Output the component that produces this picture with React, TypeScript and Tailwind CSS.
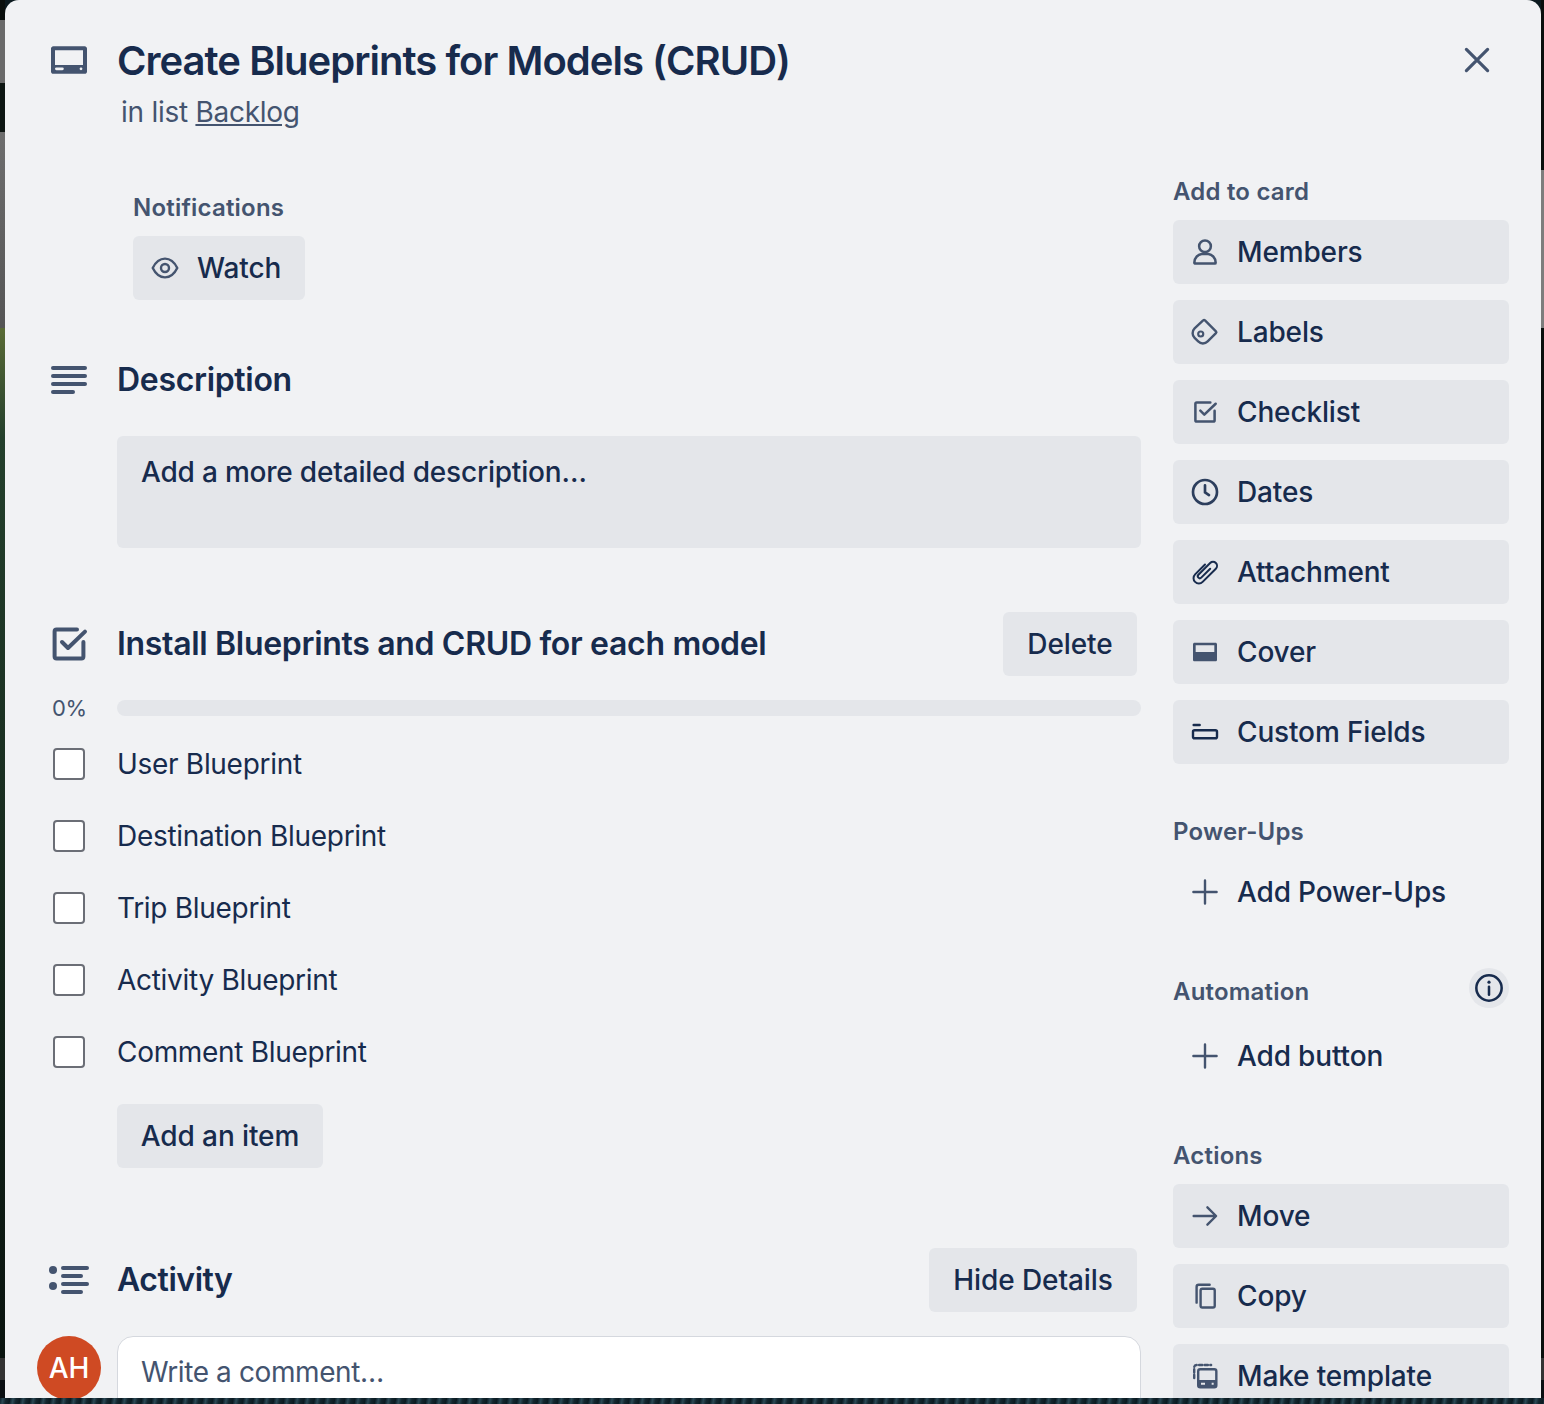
import type { ReactNode } from 'react';

const fontStack = { fontFamily: 'Inter, "Noto Sans", sans-serif' };

function Icon({ size = 32, children, className = 'text-[#44546f]' }: { size?: number; children: ReactNode; className?: string }) {
  return (
    <svg width={size} height={size} viewBox="0 0 24 24" fill="none" className={`shrink-0 ${className}`}>
      {children}
    </svg>
  );
}

const CardIcon = () => (
  <Icon size={48}>
    <path
      fillRule="evenodd"
      fill="currentColor"
      d="M4.200 4.600h15.600c.7 0 1.200.5 1.200 1.200v11.400c0 .7-.5 1.200-1.200 1.200H4.200c-.7 0-1.200-.5-1.200-1.200V5.800c0-.7.5-1.200 1.200-1.200zM5 6.600V14h14V6.600H5zm.7 8.600a.7.7 0 0 0 0 1.400h3a.7.7 0 0 0 0-1.400h-3zm12.300 0a.7.7 0 1 0 0 1.400.7.7 0 0 0 0-1.400z"
    />
  </Icon>
);

const CheckSquare = ({ size = 32, width = 1.9 }: { size?: number; width?: number }) => (
  <Icon size={size}>
    <path
      d="M16 4.800H5.800a1 1 0 0 0-1 1v12.400a1 1 0 0 0 1 1h12.400a1 1 0 0 0 1-1V11"
      stroke="currentColor"
      strokeWidth={width}
      strokeLinecap="round"
    />
    <path d="M8.500 11l3 3L20 5.800" stroke="currentColor" strokeWidth={width} strokeLinecap="round" strokeLinejoin="round" />
  </Icon>
);

const sidebarIcons: Record<string, ReactNode> = {
  Members: (
    <Icon>
      <circle cx="12" cy="7.700" r="4.400" stroke="currentColor" strokeWidth="1.900" />
      <path d="M4 20c0-3.800 2.800-6.100 5.500-6.500h5c2.700.4 5.500 2.700 5.500 6.500 0 .4-.3.7-.7.7H4.700c-.4 0-.7-.3-.7-.7z" stroke="currentColor" strokeWidth="1.900" strokeLinejoin="round" />
    </Icon>
  ),
  Labels: (
    <Icon>
      <path d="M12 3.300l8.200 8.200a1 1 0 0 1 0 1.400L14 19.100a5 5 0 0 1-7.100 0l-2.700-2.700a5 5 0 0 1 0-7.100l6.400-6a1 1 0 0 1 1.400 0z" stroke="currentColor" strokeWidth="1.800" strokeLinejoin="round" />
      <circle cx="8.800" cy="13.500" r="1.900" stroke="currentColor" strokeWidth="1.600" />
    </Icon>
  ),
  Checklist: <CheckSquare />,
  Dates: (
    <Icon className="text-[#2c3e5d]">
      <circle cx="12" cy="12" r="9" stroke="currentColor" strokeWidth="2" />
      <path d="M12 7v5.300l3 2" stroke="currentColor" strokeWidth="2" strokeLinecap="round" strokeLinejoin="round" />
    </Icon>
  ),
  Attachment: (
    <Icon className="text-[#172b4d]">
      <g transform="rotate(45 12 12)">
        <path d="M13 7.500v9.500a1.500 1.500 0 0 1-3 0V4.500a3 3 0 0 1 6 0v14a4 4 0 0 1-8 0V8" stroke="currentColor" strokeWidth="1.500" strokeLinecap="round" />
      </g>
    </Icon>
  ),
  Cover: (
    <Icon>
      <path fillRule="evenodd" fill="currentColor" d="M4.200 5h15.600c.7 0 1.200.5 1.200 1.200v11.600c0 .7-.5 1.200-1.200 1.200H4.200C3.500 19 3 18.500 3 17.800V6.200C3 5.500 3.500 5 4.200 5zM5 7v5h14V7H5z" />
    </Icon>
  ),
  'Custom Fields': (
    <Icon className="text-[#172b4d]">
      <path d="M3.500 6.800h4.500" stroke="currentColor" strokeWidth="1.800" strokeLinecap="round" />
      <rect x="3" y="10.700" width="18" height="6" rx="1.200" stroke="currentColor" strokeWidth="1.800" />
    </Icon>
  ),
  Plus: (
    <Icon>
      <path d="M12 3.300v17.400M3.300 12h17.400" stroke="currentColor" strokeWidth="1.800" strokeLinecap="round" />
    </Icon>
  ),
  Move: (
    <Icon>
      <path d="M3.500 12h16.500M13.800 5.500l6.500 6.500-6.500 6.500" stroke="currentColor" strokeWidth="1.800" strokeLinecap="round" strokeLinejoin="round" />
    </Icon>
  ),
  Copy: (
    <Icon>
      <path d="M5.700 17V5.200c0-1 .8-1.600 1.600-1.600h8.200" stroke="currentColor" strokeWidth="1.800" strokeLinecap="round" />
      <rect x="8.700" y="6.600" width="10.600" height="14" rx="1.300" stroke="currentColor" strokeWidth="1.800" />
    </Icon>
  ),
  'Make template': (
    <Icon>
      <path d="M3.900 13.500V5.500c0-1 .7-1.700 1.700-1.700h11" stroke="currentColor" strokeWidth="1.800" strokeLinecap="round" strokeDasharray="2.400 1.800" />
      <rect x="6.900" y="6.900" width="13.600" height="13.600" rx="1.500" stroke="currentColor" strokeWidth="1.800" />
      <path fillRule="evenodd" fill="currentColor" d="M7 15h13.500v4.500c0 .6-.5 1-1 1H8c-.6 0-1-.4-1-1V15zm2 2v1.500h3V17H9zm8 0v1.500h1.500V17H17z" />
    </Icon>
  ),
};

function SideLabel({ children }: { children: ReactNode }) {
  return <h3 className="h-[32px] text-[24px] leading-[32px] font-semibold tracking-[0.2px] text-[#44546f]">{children}</h3>;
}

function SideButton({ label, icon, flat }: { label: string; icon?: string; flat?: boolean }) {
  return (
    <button
      className={`flex h-[64px] w-full shrink-0 items-center gap-4 rounded-[6px] px-4 text-left text-[28px] leading-[40px] font-medium tracking-[-0.15px] text-[#172b4d] ${flat ? '' : 'bg-[#e4e6ea]'}`}
    >
      {sidebarIcons[icon ?? label]}
      {label}
    </button>
  );
}

function Pill({ children, className = '' }: { children: ReactNode; className?: string }) {
  return (
    <button className={`flex h-[64px] shrink-0 items-center rounded-[6px] bg-[#e4e6ea] text-[28px] leading-[40px] font-medium tracking-[-0.1px] text-[#172b4d] ${className}`}>
      {children}
    </button>
  );
}

const checklist = ['User Blueprint', 'Destination Blueprint', 'Trip Blueprint', 'Activity Blueprint', 'Comment Blueprint'];
const addToCard = ['Members', 'Labels', 'Checklist', 'Dates', 'Attachment', 'Cover', 'Custom Fields'];

function Main() {
  return (
    <div className="w-[1104px] shrink-0">
      {/* Notifications */}
      <div className="ml-[96px] pt-[60px]">
        <h3 className="h-[32px] text-[24px] leading-[32px] font-semibold tracking-[0.2px] text-[#44546f]">Notifications</h3>
        <Pill className="mt-3 w-[172px] gap-4 pl-4">
          <Icon>
            <path d="M2.800 12C5 7.500 8 5 12 5s7 2.500 9.200 7c-2.200 4.500-5.200 7-9.200 7s-7-2.500-9.200-7z" stroke="currentColor" strokeWidth="1.800" strokeLinejoin="round" />
            <circle cx="12" cy="12" r="3" stroke="currentColor" strokeWidth="1.800" />
          </Icon>
          Watch
        </Pill>
      </div>

      {/* Description */}
      <div className="mt-[56px] flex h-[48px] items-center">
        <div className="flex w-[64px] justify-center">
          <Icon size={48}>
            <rect x="3" y="5" width="18" height="2" rx="1" fill="currentColor" />
            <rect x="3" y="9" width="18" height="2" rx="1" fill="currentColor" />
            <rect x="3" y="13" width="18" height="2" rx="1" fill="currentColor" />
            <rect x="3" y="17" width="12" height="2" rx="1" fill="currentColor" />
          </Icon>
        </div>
        <h2 className="ml-[16px] text-[32px] leading-[48px] font-semibold tracking-[-0.32px] text-[#172b4d]">Description</h2>
      </div>
      <div className="mt-[32px] ml-[80px] h-[112px] rounded-[6px] bg-[#e4e6ea] px-6 py-4 text-[28px] leading-[40px] font-medium tracking-[-0.2px] text-[#172b4d]">
        Add a more detailed description…
      </div>

      {/* Checklist */}
      <div className="mt-[64px] flex h-[64px] items-center">
        <div className="flex w-[64px] justify-center">
          <CheckSquare size={48} width={2} />
        </div>
        <h2 className="ml-[16px] flex-1 text-[32px] leading-[48px] font-semibold tracking-[-0.32px] text-[#172b4d]">Install Blueprints and CRUD for each model</h2>
        <Pill className="mr-[4px] w-[134px] justify-center">Delete</Pill>
      </div>
      <div className="mt-[24px] flex h-[16px] items-center">
        <span className="w-[80px] pl-[15px] text-[22px] leading-[16px] tracking-[-0.3px] text-[#44546f]">0%</span>
        <div className="h-[16px] flex-1 rounded-full bg-[#e4e6ea]" />
      </div>
      <div className="mt-[12px]">
        {checklist.map((item) => (
          <div key={item} className="flex h-[72px] items-center">
            <div className="flex w-[64px] justify-center">
              <div className="h-[32px] w-[32px] rounded-[4px] border-2 border-[#6b6e76] bg-white" />
            </div>
            <span className="ml-[16px] text-[28px] leading-[40px] tracking-[-0.3px] text-[#172b4d]">{item}</span>
          </div>
        ))}
      </div>
      <Pill className="mt-[16px] ml-[80px] w-[206px] justify-center">Add an item</Pill>

      {/* Activity */}
      <div className="mt-[80px] flex h-[64px] items-center">
        <div className="flex w-[64px] justify-center">
          <Icon size={48}>
            <circle cx="4" cy="7" r="2" fill="currentColor" />
            <circle cx="4" cy="15" r="2" fill="currentColor" />
            <rect x="8" y="5" width="14" height="2" rx="1" fill="currentColor" />
            <rect x="8" y="9" width="11" height="2" rx="1" fill="currentColor" />
            <rect x="8" y="13" width="14" height="2" rx="1" fill="currentColor" />
            <rect x="8" y="17" width="11" height="2" rx="1" fill="currentColor" />
          </Icon>
        </div>
        <h2 className="ml-[16px] flex-1 text-[32px] leading-[48px] font-semibold tracking-[-0.45px] text-[#172b4d]">Activity</h2>
        <Pill className="mr-[4px] w-[208px] justify-center">Hide Details</Pill>
      </div>
      <div className="mt-[24px] flex">
        <div className="flex h-[64px] w-[64px] shrink-0 items-center justify-center rounded-full bg-[#cf4a23] text-[28px] font-medium text-white">AH</div>
        <div className="ml-[16px] h-[80px] flex-1 rounded-[16px] border border-[#d5d8de] bg-white pt-[15px] pl-[23px] text-[28px] leading-[40px] tracking-[-0.4px] text-[#44546f]">
          Write a comment…
        </div>
      </div>
    </div>
  );
}

function Sidebar() {
  return (
    <div className="ml-[32px] w-[336px] shrink-0 pt-[44px]">
      <SideLabel>Add to card</SideLabel>
      <div className="mt-3 flex flex-col gap-4">
        {addToCard.map((label) => (
          <SideButton key={label} label={label} />
        ))}
      </div>

      <div className="mt-[52px]">
        <SideLabel>Power-Ups</SideLabel>
      </div>
      <div className="mt-3">
        <SideButton flat label="Add Power-Ups" icon="Plus" />
      </div>

      <div className="mt-[44px] flex h-[40px] items-end justify-between">
        <SideLabel>Automation</SideLabel>
        <div className="flex h-[40px] w-[40px] items-center justify-center rounded-full bg-[#e4e6ea]">
          <Icon className="text-[#172b4d]">
            <circle cx="12" cy="12" r="9.500" stroke="currentColor" strokeWidth="1.900" />
            <path d="M12 11v6" stroke="currentColor" strokeWidth="1.900" strokeLinecap="round" />
            <circle cx="12" cy="7.600" r="1.200" fill="currentColor" />
          </Icon>
        </div>
      </div>
      <div className="mt-4">
        <SideButton flat label="Add button" icon="Plus" />
      </div>

      <div className="mt-[52px]">
        <SideLabel>Actions</SideLabel>
      </div>
      <div className="mt-3 flex flex-col gap-4">
        <SideButton label="Move" />
        <SideButton label="Copy" />
        <SideButton label="Make template" />
      </div>
    </div>
  );
}

export default function App() {
  return (
    <div className="flex h-[1404px] w-[1544px] flex-col overflow-hidden bg-[#0c1a1f]" style={fontStack}>
      <div className="flex h-[1398px] shrink-0">
        {/* page behind the modal, left edge */}
        <div className="flex w-[5px] shrink-0 flex-col">
          <div className="h-[20px] bg-[#0a0f0d]" />
          <div className="h-[63px] bg-[#6a6a6a]" />
          <div className="h-[49px] bg-[#0d1612]" />
          <div className="h-[196px] bg-gradient-to-b from-[#6e6e6e] to-[#555555]" />
          <div className="h-[110px] bg-gradient-to-b from-[#5a6b35] to-[#24402c]" />
          <div className="flex-1 bg-gradient-to-b from-[#24402c] to-[#0a140f]" />
          <div className="h-[22px] bg-[#333333]" />
          <div className="h-[18px] bg-[#0a0f12]" />
        </div>

        <div className="w-[1536px] shrink-0 overflow-hidden rounded-t-[14px] bg-[#f1f2f4] pl-[32px]">
          <header className="relative h-[132px] pt-[37px]">
            <div className="flex h-[48px] items-center">
              <div className="flex w-[64px] justify-center">
                <CardIcon />
              </div>
              <h1 className="ml-[16px] text-[40px] leading-[48px] font-semibold tracking-[-0.97px] text-[#172b4d]">Create Blueprints for Models (CRUD)</h1>
            </div>
            <p className="mt-[7px] ml-[84px] text-[28px] leading-[40px] tracking-[-0.27px] text-[#44546f]">
              in list <span className="underline">Backlog</span>
            </p>
            <button className="absolute top-[36px] right-[40px] text-[#44546f]">
              <svg width="48" height="48" viewBox="0 0 24 24" fill="none">
                <path d="M6.700 6.700l10.600 10.600M17.300 6.700L6.700 17.300" stroke="currentColor" strokeWidth="1.600" strokeLinecap="round" />
              </svg>
            </button>
          </header>
          <div className="flex">
            <Main />
            <Sidebar />
          </div>
        </div>

        {/* right edge */}
        <div className="flex w-[3px] shrink-0 flex-col">
          <div className="h-[170px] bg-[#0a0f0d]" />
          <div className="h-[158px] bg-[#7d7d7d]" />
          <div className="flex-1 bg-[#0a0f0d]" />
          <div className="h-[22px] bg-[#333333]" />
          <div className="h-[18px] bg-[#0a0f12]" />
        </div>
      </div>
      <div className="h-[6px] bg-[repeating-linear-gradient(100deg,#0e1f28_0px,#2c4a56_3px,#14262e_6px,#0b1a20_10px)]" />
    </div>
  );
}
